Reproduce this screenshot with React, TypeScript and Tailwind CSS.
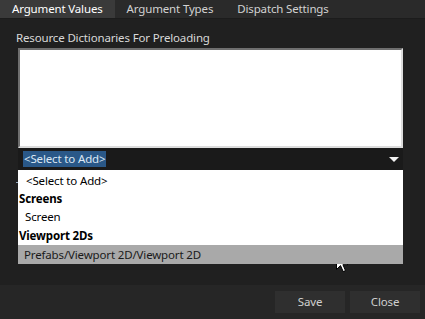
const font = { fontFamily: '"Noto Sans", "Open Sans", sans-serif' };

function Tab({ label, active }: { label: string; active?: boolean }) {
  return (
    <div
      className={
        active
          ? "h-full px-3 flex items-center bg-[#3a3a3a] text-white"
          : "h-full px-3 flex items-center text-[#d2d2d2]"
      }
    >
      {label}
    </div>
  );
}

function Cursor() {
  return (
    <svg width="13" height="20" viewBox="0 0 13 20" className="absolute left-[336px] top-[253px]">
      <path
        d="M0.5 0.5 L0.5 16.5 L4.5 12.6 L7.2 18.6 L9.5 17.6 L6.9 11.7 L11.9 11.7 Z"
        fill="#ffffff"
        stroke="#000000"
        strokeWidth="1"
        strokeLinejoin="miter"
      />
    </svg>
  );
}

export default function App() {
  return (
    <div
      className="relative w-[425px] h-[319px] bg-[#202020] flex flex-col text-[11.5px] tracking-[-0.15px] overflow-hidden"
      style={font}
    >
      {/* tabs */}
      <div className="h-[19px] flex bg-[#2a2a2a] border-b border-[#1c1c1c] shrink-0">
        <Tab label="Argument Values" active />
        <Tab label="Argument Types" />
        <Tab label="Dispatch Settings" />
      </div>

      {/* content */}
      <div className="flex-1 pt-[11px] pl-[16px]">
        <div className="h-[16px] leading-[16px] mb-[2px] text-[#d8d8d8]">Resource Dictionaries For Preloading</div>
        <div className="ml-[2px] w-[385px] h-[100px] bg-white border-2 border-t-[#6f6f6f] border-l-[#6f6f6f] border-b-[#dcdcdc] border-r-[#dcdcdc]" />

        <div className="relative ml-[2px] w-[385px]">
          <div className="h-[22px] bg-[#1a1a1a] flex items-center pl-[5px] pr-[4px]">
            <span className="h-[16px] leading-[16px] px-[1px] bg-[#2a5888] text-[#dce8f4]">&lt;Select to Add&gt;</span>
            <svg width="10" height="5" viewBox="0 0 10 5" className="ml-auto">
              <polygon points="0,0 10,0 5,5" fill="#f2f2f2" />
            </svg>
          </div>

          {/* open dropdown list */}
          <div className="absolute left-0 top-full w-[385px] bg-white text-black pt-[2px] z-10">
            <div className="h-[18px] leading-[18px] pl-[8px]">&lt;Select to Add&gt;</div>
            <div className="h-[18px] leading-[18px] pl-[1px] font-bold">Screens</div>
            <div className="h-[18px] leading-[18px] pl-[7px]">Screen</div>
            <div className="h-[19px] leading-[19px] pl-[1px] font-bold">Viewport 2Ds</div>
            <div className="h-[19px] leading-[19px] pl-[6px] bg-[#a9a9a9] text-[#1a1a1a]">Prefabs/Viewport 2D/Viewport 2D</div>
          </div>
        </div>

        {/* sliver of a label hidden behind the open list */}
        <div className="mt-[12px] w-[3px] h-[8px] flex flex-col">
          <div className="h-[1px] bg-[#8fa6bc]" />
          <div className="h-[7px] w-[1px] ml-[2px] bg-[#8fa6bc]" />
        </div>
      </div>

      {/* footer */}
      <div className="h-[34px] bg-[#262626] flex items-center justify-end gap-[5px] pr-[5px] shrink-0">
        <button className="w-[70px] h-[22px] bg-[#2f2f2f] text-[#cfcfcf]">Save</button>
        <button className="w-[70px] h-[22px] bg-[#2f2f2f] text-[#cfcfcf]">Close</button>
      </div>

      <Cursor />
    </div>
  );
}
